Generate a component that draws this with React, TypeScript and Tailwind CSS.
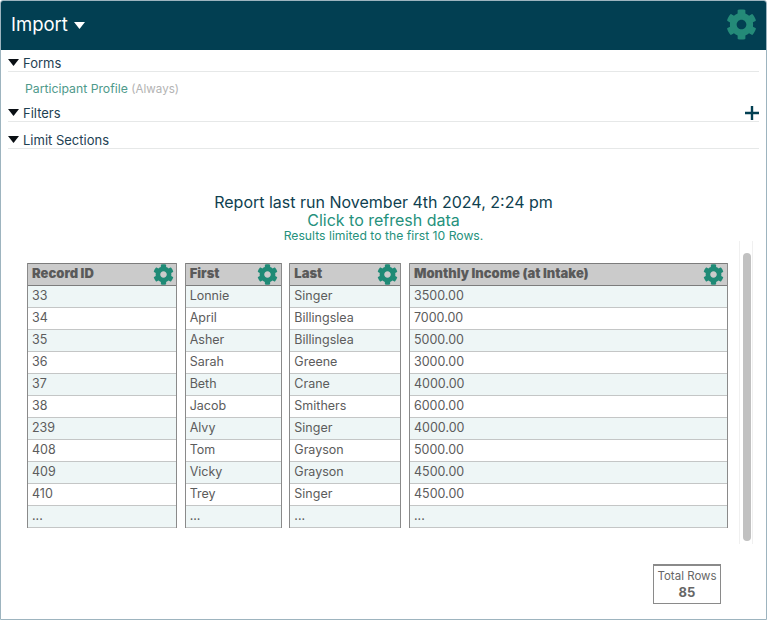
import { FaCog } from 'react-icons/fa';

const COLUMNS = [
  { title: 'Record ID', width: 'w-[150px]', values: ['33', '34', '35', '36', '37', '38', '239', '408', '409', '410', '...'] },
  { title: 'First', width: 'w-[97px]', values: ['Lonnie', 'April', 'Asher', 'Sarah', 'Beth', 'Jacob', 'Alvy', 'Tom', 'Vicky', 'Trey', '...'] },
  { title: 'Last', width: 'w-[112px]', values: ['Singer', 'Billingslea', 'Billingslea', 'Greene', 'Crane', 'Smithers', 'Singer', 'Grayson', 'Grayson', 'Singer', '...'] },
  { title: 'Monthly Income (at Intake)', width: 'w-[319px]', values: ['3500.00', '7000.00', '5000.00', '3000.00', '4000.00', '6000.00', '4000.00', '5000.00', '4500.00', '4500.00', '...'] },
];

function Section({ title, plus }: { title: string; plus?: boolean }) {
  return (
    <div className="relative flex h-[22px] items-end border-b border-[#e6e8e8]">
      <svg className="mb-[5px] mr-[4px] h-[7px] w-[11px]" viewBox="0 0 11 7" aria-hidden="true">
        <path d="M0 0h11L5.5 7z" fill="#0a0f14" />
      </svg>
      <span className="text-[13px] leading-[16px] text-[#1e4152]">{title}</span>
      {plus && (
        <svg className="absolute right-0 bottom-[1px] h-[14px] w-[14px]" viewBox="0 0 14 14" aria-hidden="true">
          <path d="M7 0v14M0 7h14" stroke="#023f52" strokeWidth="2.4" />
        </svg>
      )}
    </div>
  );
}

function Column({ title, width, values }: { title: string; width: string; values: string[] }) {
  return (
    <div className={`${width} shrink-0 border-x border-[#8a8a8a]`}>
      <div className="flex h-[23px] items-center justify-between border-y border-[#7c7c7c] bg-[#cbcbcb] pl-1 pr-[2.5px]">
        <span className="mb-[4px] text-[13px] font-black leading-[16px] text-[#5a5a5a]">{title}</span>
        <FaCog className="h-[21px] w-[21px] text-[#1f8a76]" />
      </div>
      {values.map((value, i) => (
        <div
          key={i}
          className={`h-[22px] border-b border-[#c4c6c6] pl-1 text-[12.5px] leading-[20px] text-[#5c5c5c] ${i % 2 === 0 ? 'bg-[#eef6f6]' : 'bg-white'}`}
        >
          {value}
        </div>
      ))}
    </div>
  );
}

export default function App() {
  return (
    <div className="h-[620px] w-[767px] overflow-hidden rounded-t-[3px] border border-[#9db4bf] bg-white font-['Inter',sans-serif]">
      <header className="flex h-[49px] items-center justify-between bg-[#023f52] pb-[2px] pl-[10px] pr-[9px]">
        <div className="flex items-center gap-[6px]">
          <span className="text-[18.5px] text-white">Import</span>
          <svg className="mt-[2px] h-[7px] w-[11px]" viewBox="0 0 11 7" aria-hidden="true">
            <path d="M0 0h11L5.5 7z" fill="#fff" />
          </svg>
        </div>
        <FaCog className="h-[31px] w-[31px] text-[#248a78]" />
      </header>

      <div className="px-[7px]">
        <Section title="Forms" />
        <p className="pb-[3px] pl-[17px] pt-[9px] text-[12.25px] leading-[16px] text-[#4f9a8b]">
          Participant Profile <span className="text-[11.6px] text-[#b3b3b3]">(Always)</span>
        </p>
        <Section title="Filters" plus />
        <div className="mt-[5px]">
          <Section title="Limit Sections" />
        </div>
      </div>

      <div className="mt-[44px] text-center">
        <p className="text-[16px] leading-[18px] text-[#0f3f50]">Report last run November 4th 2024, 2:24 pm</p>
        <p className="text-[16px] leading-[18px] text-[#25917c]">Click to refresh data</p>
        <p className="text-[12.2px] leading-[14px] text-[#25917c]">Results limited to the first 10 Rows.</p>
      </div>

      <div className="-mt-[2px] flex h-[303px] pl-[26px]">
        <div className="mt-[22px] flex w-[701px] justify-between self-start">
          {COLUMNS.map((column) => (
            <Column key={column.title} {...column} />
          ))}
        </div>
        <div className="ml-[11px] flex w-[14px] justify-center border-x border-[#f0f0f0] pl-[1px] pt-[12px]">
          <div className="h-[288px] w-[8px] rounded-full bg-[#c1c1c1]" />
        </div>
      </div>

      <div className="mr-[45px] mt-[20px] flex justify-end">
        <div className="h-[40px] w-[68px] border border-t-2 border-[#8a8a8a] pt-[1px] text-center text-[#666]">
          <div className="text-[11.5px] leading-[18px]">Total Rows</div>
          <div className="text-[13px] font-bold leading-[14px]">85</div>
        </div>
      </div>
    </div>
  );
}
